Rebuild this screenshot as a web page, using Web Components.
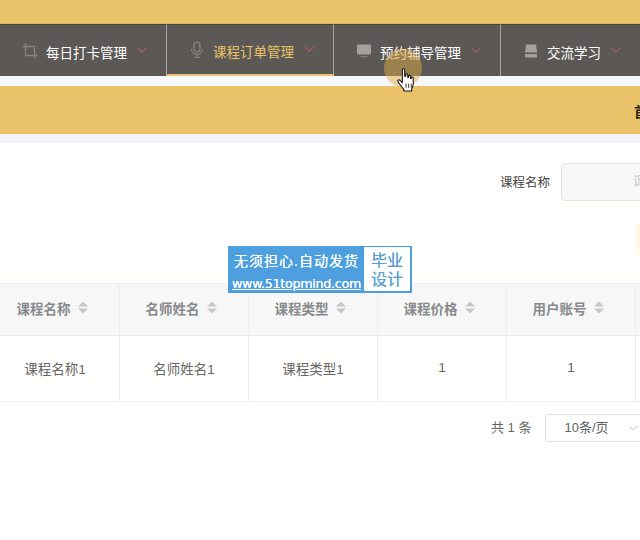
<!DOCTYPE html>
<html>
<head>
<meta charset="utf-8">
<style>
  html, body { margin: 0; padding: 0; background: #fff; overflow: hidden; height: 540px; }
  body { font-family: "Liberation Sans", "Noto Sans CJK SC", sans-serif; position: relative; }
</style>
</head>
<body>
<app-page>
  <nav-bar slot="nav">
    <nav-item label="每日打卡管理" icon="crop"></nav-item>
    <nav-item label="课程订单管理" icon="mic" active></nav-item>
    <nav-item label="预约辅导管理" icon="screen"></nav-item>
    <nav-item label="交流学习" icon="stack"></nav-item>
  </nav-bar>
  <gold-banner slot="banner">首</gold-banner>
  <search-row slot="search" label="课程名称" placeholder="课程名称"></search-row>
  <data-table slot="table"></data-table>
  <page-footer slot="footer"></page-footer>
</app-page>
<water-mark></water-mark>
<hand-cursor></hand-cursor>

<script>
const ICONS = {
  crop: `<svg width="16" height="16" viewBox="0 0 16 16" fill="none" stroke="#85827f" stroke-width="1.3"><path d="M3.5 0.5V12.5H15.5M0.5 3.5H12.5V15.5"/></svg>`,
  mic: `<svg width="16" height="18" viewBox="0 0 16 18" fill="none" stroke="#8b8784" stroke-width="1.2"><rect x="5" y="1" width="6" height="10" rx="3"/><path d="M2.5 8c0 7 11 7 11 0M8 13.500V16.500M5 16.500h6"/></svg>`,
  screen: `<svg width="16" height="16" viewBox="0 0 16 16"><rect x="1" y="1.500" width="14" height="10" rx="1" fill="#a3a09e"/><rect x="4.500" y="13" width="7" height="1.200" fill="#85827f"/></svg>`,
  stack: `<svg width="16" height="16" viewBox="0 0 16 16"><path d="M3 1.500h10l1 8H2z" fill="#a3a09e"/><rect x="2" y="11" width="12" height="3.500" rx="0.500" fill="#a3a09e"/></svg>`
};

class AppPage extends HTMLElement {
  constructor() {
    super();
    this.attachShadow({ mode: "open" }).innerHTML = `
      <style>
        :host { display: block; width: 640px; overflow: hidden; }
        .top { height: 23px; background: #e9c269; border-bottom: 1px solid #d8b45f; }
        .gap { height: 10px; background: #f5f7fa; }
        .gap2 { height: 9px; background: #f4f5f8; }
      </style>
      <div class="top"></div>
      <slot name="nav"></slot>
      <div class="gap"></div>
      <slot name="banner"></slot>
      <div class="gap2"></div>
      <slot name="search"></slot>
      <slot name="table"></slot>
      <slot name="footer"></slot>
    `;
  }
}

class NavBar extends HTMLElement {
  constructor() {
    super();
    this.attachShadow({ mode: "open" }).innerHTML = `
      <style>
        :host { display: flex; height: 52px; background: #5b5855; width: 700px; }
      </style>
      <slot></slot>
    `;
  }
}

class NavItem extends HTMLElement {
  constructor() {
    super();
    this.attachShadow({ mode: "open" });
  }
  connectedCallback() {
    let active = this.hasAttribute("active");
    this.shadowRoot.innerHTML = `
      <style>
        :host { display: flex; box-sizing: border-box; width: 167px; flex: none; align-items: center; gap: 8px; padding: 0 0 0 22px;
          border-right: 1px solid #a9a7a5; border-top: 1px solid #4b4436; height: 52px; color: ${active ? "#e9c269" : "#fff"}; font-size: 13.500px; }
        :host([active]) { border-bottom: 2px solid #e9c269; }
        .ic { width: 16px; height: 18px; display: flex; align-items: center; justify-content: center; flex: none; }
        .lb { white-space: nowrap; padding-top: 2px; }
        svg.ar { margin-left: 1px; margin-top: 0; }
      </style>
      <span class="ic">${ICONS[this.getAttribute("icon")]}</span>
      <span class="lb">${this.getAttribute("label")}</span>
      <svg class="ar" width="12" height="7" viewBox="0 0 12 7" fill="none" stroke="#a05a64" stroke-width="1.500"><path d="M1.500 1l4.500 4 4.500-4"/></svg>
    `;
  }
}

class GoldBanner extends HTMLElement {
  constructor() {
    super();
    this.attachShadow({ mode: "open" }).innerHTML = `
      <style>
        :host { display: block; height: 48px; background: #e9c269; position: relative; overflow: hidden; }
        .t { display: flex; height: 100%; align-items: center; padding: 0 0 0 634px; width: 40px; font-size: 14px; font-weight: bold; color: #2b2618; margin-top: 1px; }
      </style>
      <div class="t"><slot></slot></div>
    `;
  }
}

class SearchRow extends HTMLElement {
  constructor() {
    super();
    this.attachShadow({ mode: "open" });
  }
  connectedCallback() {
    this.shadowRoot.innerHTML = `
      <style>
        :host { display: block; height: 140px; background: #fffffd; overflow: hidden; box-sizing: border-box; padding: 20px 0 0 500px; }
        .r { display: flex; align-items: center; gap: 11px; width: 400px; }
        label { font-size: 12.500px; color: #444; white-space: nowrap; width: 50px; margin-top: -2px; }
        .in { box-sizing: border-box; width: 200px; height: 38px; background: #f7f7f7; border: 1px solid #e4e4e4; border-radius: 4px;
          color: #c4c4c4; font-size: 12.500px; line-height: 36px; padding-left: 71px; white-space: nowrap; }
        .btn { margin: 23px 0 0 138px; width: 60px; height: 30px; background: #fdf6e0; box-shadow: -3px 0 3px #fffbf2; }
      </style>
      <div class="r"><label>${this.getAttribute("label")}</label><div class="in">${this.getAttribute("placeholder")}</div></div>
      <div class="btn"></div>
    `;
  }
}

class DataTable extends HTMLElement {
  constructor() {
    super();
    let cols = [["课程名称", "课程名称1"], ["名师姓名", "名师姓名1"], ["课程类型", "课程类型1"], ["课程价格", "1"], ["用户账号", "1"]];
    let arrow = `<svg class="s" width="10" height="13" viewBox="0 0 10 13" fill="#c4c6ca"><path d="M5 0.500l5 5H0zM5 12.500l-5-5h10z"/></svg>`;
    let head = cols.map(c => `<div class="c h"><span>${c[0]}</span>${arrow}</div>`).join("");
    let body = cols.map(c => `<div class="c d">${c[1]}</div>`).join("");
    this.attachShadow({ mode: "open" }).innerHTML = `
      <style>
        :host { display: block; margin-left: -9px; width: 700px; border-top: 1px solid #ececec; border-bottom: 1px solid #ececec; }
        .row { display: grid; grid-template-columns: repeat(5, 129px) 60px; }
        .c { box-sizing: border-box; display: flex; align-items: center; justify-content: center; border-right: 1px solid #ececec; }
        .h { height: 52px; background: #f7f7f7; color: #888a8d; font-size: 13.500px; font-weight: bold; gap: 7px; border-bottom: 1px solid #ececec; padding: 0 6px 4px 0; }
        .d { height: 65px; background: #fffffd; color: #666; font-size: 13.500px; padding-bottom: 2px; }
      </style>
      <div class="row">${head}<div class="c h"></div></div>
      <div class="row">${body}<div class="c d"></div></div>
    `;
  }
}

class PageFooter extends HTMLElement {
  constructor() {
    super();
    this.attachShadow({ mode: "open" }).innerHTML = `
      <style>
        :host { display: flex; align-items: flex-start; gap: 14px; box-sizing: border-box; padding: 12px 0 0 491px; width: 800px; height: 139px; background: #fffffd; }
        .t { font-size: 13px; color: #666; line-height: 28px; white-space: nowrap; }
        .sel { box-sizing: border-box; width: 110px; height: 28px; border: 1px solid #dcdfe6; border-radius: 3px; display: flex; align-items: center; padding: 0 0 3px 18px; gap: 19px;
          font-size: 13px; color: #606266; }
        .sel svg { margin-top: 3px; }
      </style>
      <span class="t">共 1 条</span>
      <div class="sel"><span>10条/页</span>
        <svg width="10" height="6" viewBox="0 0 10 6" fill="none" stroke="#c0c4cc"><path d="M1 1l4 4 4-4"/></svg>
      </div>
    `;
  }
}

class WaterMark extends HTMLElement {
  constructor() {
    super();
    this.attachShadow({ mode: "open" }).innerHTML = `
      <style>
        :host { position: absolute; left: 228px; top: 246px; width: 184px; height: 47px; box-sizing: border-box; background: #4d9fe0; display: flex; padding: 1px 2px 2px 1px; }
        .l { width: 135px; flex: none; color: #fff; text-align: center; white-space: nowrap; padding-top: 1px; }
        .a { font-size: 14px; line-height: 27px; letter-spacing: 1px; text-shadow: 0 0 0.500px #fff; }
        .b { font-size: 12.700px; line-height: 17px; text-decoration: underline; font-family: "DejaVu Sans", sans-serif; letter-spacing: -0.300px; text-shadow: 0 0 0.400px #fff; }
        .r { flex: 1; background: #fff; color: #5b9fd0; font-size: 16px; line-height: 19px; text-align: center; padding-top: 4px; border-radius: 1px; text-shadow: 0 0 0.400px #5b9fd0; }
      </style>
      <div class="l"><div class="a">无须担心.自动发货</div><div class="b">www.51topmind.com</div></div>
      <div class="r">毕业<br>设计</div>
    `;
  }
}

class HandCursor extends HTMLElement {
  constructor() {
    super();
    this.attachShadow({ mode: "open" }).innerHTML = `
      <style>
        :host { position: absolute; left: 384px; top: 49px; width: 40px; height: 44px; }
        .g { position: absolute; left: 0; top: 0; width: 38px; height: 38px; border-radius: 50%; background: rgba(222,170,70,0.5); }
        svg { position: absolute; left: 13px; top: 19px; }
      </style>
      <div class="g"></div>
      <svg width="18" height="24" viewBox="0 0 17 23"><path d="M5 1.500c0-1.300 2.200-1.300 2.200 0V8l1 0V6.500c0-1.200 2-1.200 2 0V9l.8 0V7.800c0-1.100 1.900-1.100 1.900 0V10l.7 0V9.300c0-1 1.800-1 1.800 0V15c0 2.500-1 4-1.500 5.500v1.500H6.500v-1.500C4.500 18 2 15.500 0.800 13c-.7-1.500 1-2.300 2-1.200L5 14z" fill="#fff" stroke="#111" stroke-width="1" stroke-linejoin="round"/><path d="M8.500 15v4M11 15v4M13.500 15v4" stroke="#111" stroke-width="0.800"/></svg>
    `;
  }
}

customElements.define("app-page", AppPage);
customElements.define("nav-bar", NavBar);
customElements.define("nav-item", NavItem);
customElements.define("gold-banner", GoldBanner);
customElements.define("search-row", SearchRow);
customElements.define("data-table", DataTable);
customElements.define("page-footer", PageFooter);
customElements.define("water-mark", WaterMark);
customElements.define("hand-cursor", HandCursor);
</script>
</body>
</html>
